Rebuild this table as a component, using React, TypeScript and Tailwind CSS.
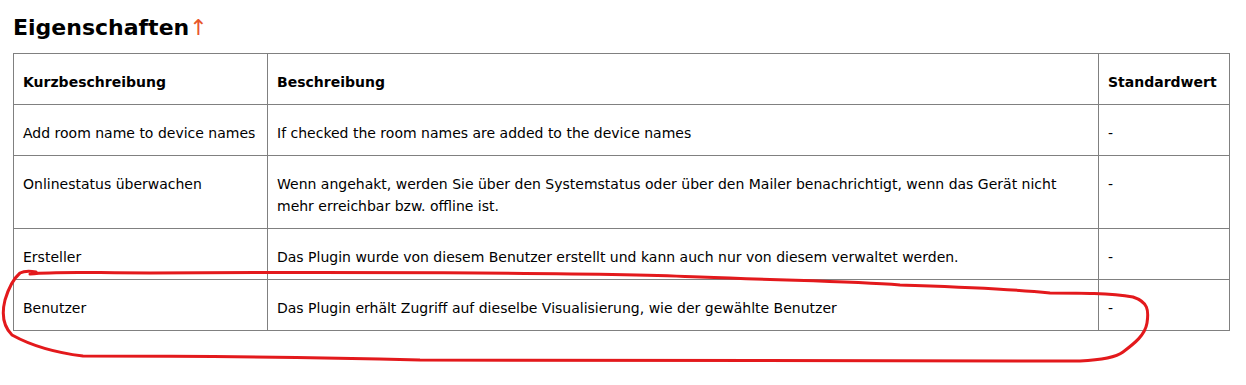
const rows: { short: string; desc: string[]; def: string }[] = [
  {
    short: "Add room name to device names",
    desc: ["If checked the room names are added to the device names"],
    def: "-",
  },
  {
    short: "Onlinestatus überwachen",
    desc: [
      "Wenn angehakt, werden Sie über den Systemstatus oder über den Mailer benachrichtigt, wenn das Gerät nicht",
      "mehr erreichbar bzw. offline ist.",
    ],
    def: "-",
  },
  {
    short: "Ersteller",
    desc: ["Das Plugin wurde von diesem Benutzer erstellt und kann auch nur von diesem verwaltet werden."],
    def: "-",
  },
  {
    short: "Benutzer",
    desc: ["Das Plugin erhält Zugriff auf dieselbe Visualisierung, wie der gewählte Benutzer"],
    def: "-",
  },
];

function Marker() {
  return (
    <svg
      className="pointer-events-none absolute left-0 top-0"
      width={1246}
      height={385}
      viewBox="0 0 1246 385"
      fill="none"
    >
      <path
        d="M30 274 C60 271 90 273 150 273 C300 272 600 272 700 277 C800 281 850 281 900 285 C960 287 1000 288 1050 293 C1080 293 1110 293 1133 297 C1148 302 1149 310 1147 323 C1145 335 1135 343 1123 352 C1115 358 1100 360 1080 361 L420 360 C300 357 150 356 83 356 C50 352 30 345 12 335 C2 325 2 312 5 300 C8 290 12 280 20 273 C24 271 30 271 36 272"
        stroke="#e3191c"
        strokeWidth={3}
        strokeLinecap="round"
        strokeLinejoin="round"
      />
    </svg>
  );
}

export default function App() {
  return (
    <div className="relative h-[385px] w-[1246px] bg-white font-['DejaVu_Sans',sans-serif] text-black">
      <h2 className="pl-[13px] pt-[14px] text-[22px] font-bold leading-[28px]">
        Eigenschaften<span className="font-normal text-[#e8562a]">↑</span>
      </h2>
      <table className="ml-[13px] mt-[11px] table-fixed border-collapse text-[14px] leading-[22px]">
        <colgroup>
          <col className="w-[254px]" />
          <col className="w-[831px]" />
          <col className="w-[131px]" />
        </colgroup>
        <thead>
          <tr className="h-[51px]">
            {["Kurzbeschreibung", "Beschreibung", "Standardwert"].map((h) => (
              <th
                key={h}
                className="border border-[#808080] px-[9px] pb-[11px] pt-[17px] text-left align-top font-bold"
              >
                {h}
              </th>
            ))}
          </tr>
        </thead>
        <tbody>
          {rows.map((r) => (
            <tr key={r.short}>
              <td className="border border-[#808080] px-[9px] pb-[11px] pt-[17px] align-top">{r.short}</td>
              <td className="border border-[#808080] px-[9px] pb-[11px] pt-[17px] align-top">
                {r.desc.map((l) => (
                  <div key={l}>{l}</div>
                ))}
              </td>
              <td className="border border-[#808080] px-[9px] pb-[11px] pt-[17px] align-top">{r.def}</td>
            </tr>
          ))}
        </tbody>
      </table>
      <Marker />
    </div>
  );
}
